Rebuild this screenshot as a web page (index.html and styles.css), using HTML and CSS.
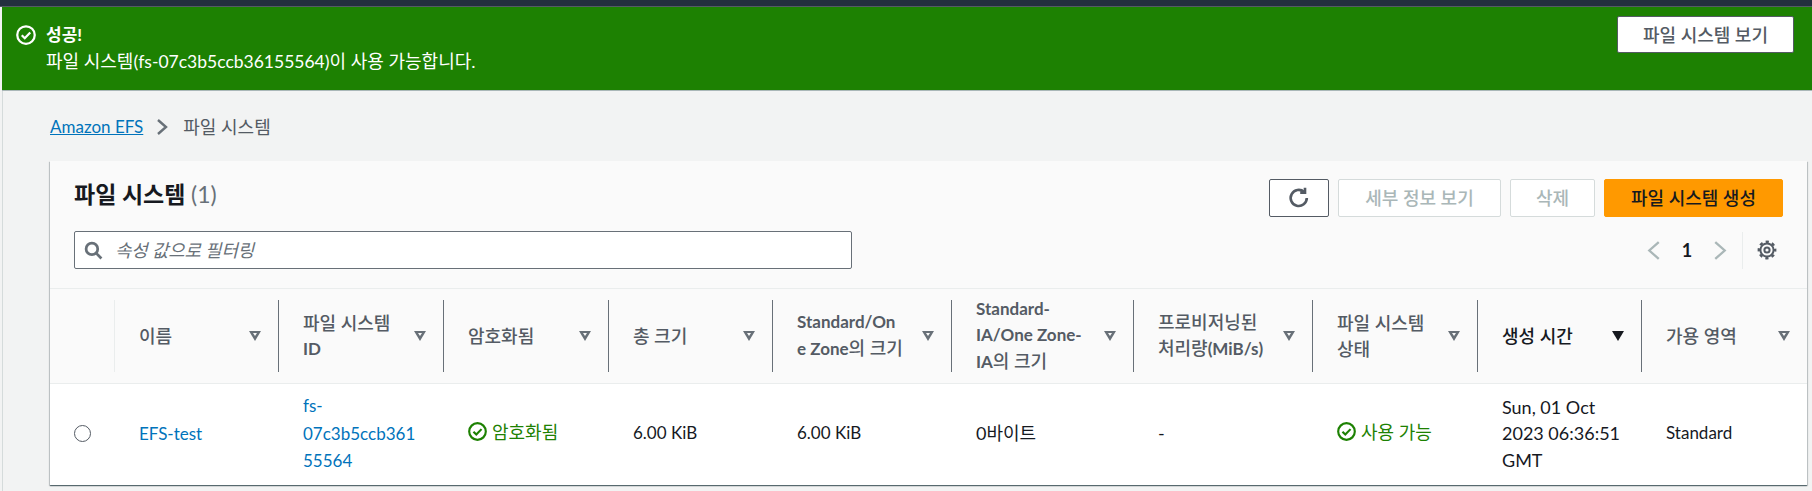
FILE: index.html
```html
<!DOCTYPE html>
<html lang="ko">
<head>
<meta charset="utf-8">
<title>파일 시스템</title>
<link rel="stylesheet" href="styles.css">
</head>
<body>
<div class="topbar"></div>
<div class="page">
<div class="flash">
  <svg class="flash-icon" viewBox="0 0 16 16"><circle cx="8" cy="8" r="7"/><path d="M4.6 8.2l2.4 2.4 4.4-4.6"/></svg>
  <div class="flash-text">
    <div class="flash-title">성공!</div>
    <div class="flash-msg">파일 시스템(<span class="flash-id">fs-07c3b5ccb36155564</span>)이 사용 가능합니다.</div>
  </div>
  <button class="btn btn-flash">파일 시스템 보기</button>
</div>
<main class="content">
  <nav class="crumbs">
    <a class="crumb-link lat" href="#">Amazon EFS</a>
    <svg class="crumb-sep" viewBox="0 0 12 18"><path d="M2 2l8 7-8 7"/></svg>
    <span class="crumb-cur">파일 시스템</span>
  </nav>
  <section class="panel">
    <div class="panel-head">
      <div class="head-row">
        <h1 class="title">파일 시스템 <span class="count">(1)</span></h1>
        <div class="actions">
          <button class="btn btn-icon"><svg viewBox="0 0 20 20"><path d="M16.5 10a6.7 6.7 0 1 1-2.2-5"/><path d="M15 1.5v4h-4"/></svg></button>
          <button class="btn btn-off btn-details">세부 정보 보기</button>
          <button class="btn btn-off btn-delete">삭제</button>
          <button class="btn btn-primary">파일 시스템 생성</button>
        </div>
      </div>
      <div class="tools-row">
        <div class="filter">
          <svg class="search" viewBox="0 0 18 18"><circle cx="7.5" cy="7.5" r="5.5"/><path d="M11.5 11.5l5 5"/></svg>
          <span class="placeholder">속성 값으로 필터링</span>
        </div>
        <div class="pager">
          <svg class="pg-arrow" viewBox="0 0 14 20"><path d="M12 2L3 10l9 8"/></svg>
          <span class="pg-num">1</span>
          <svg class="pg-arrow" viewBox="0 0 14 20"><path d="M2 2l9 8-9 8"/></svg>
          <span class="pg-div"></span>
          <svg class="gear" viewBox="0 0 20 20"><circle cx="10" cy="10" r="2.6"/><circle cx="10" cy="10" r="6.6"/><circle class="gear-teeth" cx="10" cy="10" r="8.2"/></svg>
        </div>
      </div>
    </div>
    <table class="grid">
      <colgroup>
        <col class="c-radio"><col class="c-name"><col class="c-id"><col class="c-enc"><col class="c-total"><col class="c-std"><col class="c-ia"><col class="c-tp"><col class="c-state"><col class="c-time"><col class="c-az">
      </colgroup>
      <thead>
        <tr>
          <th><div class="th-box th-first"></div></th>
          <th><div class="th-box"><span class="th-label">이름</span><span class="tri"></span></div></th>
          <th><div class="th-box"><span class="th-label"><span class="th-line">파일 시스템</span><span class="th-line lat-b">ID</span></span><span class="tri"></span></div></th>
          <th><div class="th-box"><span class="th-label">암호화됨</span><span class="tri"></span></div></th>
          <th><div class="th-box"><span class="th-label">총 크기</span><span class="tri"></span></div></th>
          <th><div class="th-box"><span class="th-label"><span class="th-line lat-b">Standard/On</span><span class="th-line"><span class="lat-b">e Zone</span>의 크기</span></span><span class="tri"></span></div></th>
          <th><div class="th-box"><span class="th-label"><span class="th-line lat-b">Standard-</span><span class="th-line lat-b">IA/One Zone-</span><span class="th-line"><span class="lat-b">IA</span>의 크기</span></span><span class="tri"></span></div></th>
          <th><div class="th-box"><span class="th-label"><span class="th-line">프로비저닝된</span><span class="th-line">처리량<span class="lat-b">(MiB/s)</span></span></span><span class="tri"></span></div></th>
          <th><div class="th-box"><span class="th-label"><span class="th-line">파일 시스템</span><span class="th-line">상태</span></span><span class="tri"></span></div></th>
          <th><div class="th-box"><span class="th-label th-sorted">생성 시간</span><span class="tri tri-on"></span></div></th>
          <th><div class="th-box"><span class="th-label">가용 영역</span><span class="tri"></span></div></th>
        </tr>
      </thead>
      <tbody>
        <tr>
          <td class="td-radio"><span class="radio"></span></td>
          <td><a class="link lat" href="#">EFS-test</a></td>
          <td class="td-brk"><a class="link lat" href="#">fs-07c3b5ccb36155564</a></td>
          <td><span class="ok"><svg class="ok-icon" viewBox="0 0 16 16"><circle cx="8" cy="8" r="7"/><path d="M4.6 8.2l2.4 2.4 4.4-4.6"/></svg>암호화됨</span></td>
          <td class="lat">6.00 KiB</td>
          <td class="lat">6.00 KiB</td>
          <td>0바이트</td>
          <td>-</td>
          <td><span class="ok"><svg class="ok-icon" viewBox="0 0 16 16"><circle cx="8" cy="8" r="7"/><path d="M4.6 8.2l2.4 2.4 4.4-4.6"/></svg>사용 가능</span></td>
          <td>Sun, 01 Oct 2023 06:36:51 GMT</td>
          <td class="lat">Standard</td>
        </tr>
      </tbody>
    </table>
  </section>
</main>
</div>
</body>
</html>
```
FILE: styles.css
```css
* { box-sizing: border-box; }
html, body { height: 100%; }
body {
  margin: 0;
  background: #f2f3f3;
  color: #16191f;
  font-family: "Lato", "Noto Sans CJK KR", sans-serif;
  font-size: 18px;
  line-height: 26px;
  overflow: hidden;
}
.lat { font-size: 17px; }
.lat-b { font-size: 17px; font-weight: 700; }
.topbar { height: 7px; background: #232f3e; border-bottom: 1px solid #545b64; }
.page { height: 484px; margin-left: 2px; border-left: 1px solid #d5dbdb; }
.flash {
  height: 84px;
  margin-left: -1px;
  padding: 9px 18px 0 14px;
  background: #1d8102;
  border-bottom: 1px solid #aab7b8;
  color: #fff;
  display: flex;
  align-items: flex-start;
  gap: 10px;
}
.flash-icon { width: 20px; height: 20px; margin-top: 9px; fill: none; stroke: #fff; stroke-width: 1.8; }
.flash-text { flex: 1; padding-top: 6px; }
.flash-title { font-weight: 700; font-size: 17px; line-height: 26px; }
.flash-msg { line-height: 26px; }
.flash-id { font-size: 17.5px; }
.btn {
  font: inherit;
  font-size: 18px;
  height: 38px;
  border-radius: 2px;
  padding: 0;
}
.btn-flash { width: 177px; height: 37px; background: #fff; color: #545b64; border: 1px solid #545b64; font-weight: 500; }
.content { padding: 0 5px 0 47px; }
.crumbs { height: 70px; display: flex; align-items: center; gap: 13px; padding-top: 2px; }
.crumb-link { color: #0073bb; }
.crumb-sep { width: 12px; height: 18px; fill: none; stroke: #687078; stroke-width: 2.4; }
.crumb-cur { color: #545b64; margin-left: 2px; }
.panel {
  background: #fff;
  box-shadow: 0 1px 1px 0 rgba(0,28,36,.5), 1px 1px 1px 0 rgba(0,28,36,.15), -1px 1px 1px 0 rgba(0,28,36,.15);
}
.panel-head { background: #fafafa; padding: 18px 24px 0; border-bottom: 1px solid #eaeded; height: 128px; }
.head-row { display: flex; justify-content: space-between; align-items: flex-start; }
.title { margin: 0; font-size: 23px; line-height: 30px; font-weight: 700; }
.count { font-weight: 400; color: #687078; }
.actions { display: flex; gap: 9px; }
.btn-icon { width: 60px; background: #fff; border: 1px solid #545b64; display: flex; align-items: center; justify-content: center; }
.btn-icon svg { width: 24px; height: 24px; fill: none; stroke: #545b64; stroke-width: 2.2; }
.btn-off { background: #fff; border: 1px solid #d5dbdb; color: #aab7b8; font-weight: 500; }
.btn-details { width: 163px; }
.btn-delete { width: 85px; }
.btn-primary { width: 179px; background: #ff9900; border: 1px solid #ff9900; color: #16191f; font-weight: 500; }
.tools-row { display: flex; justify-content: space-between; align-items: center; margin-top: 14px; }
.filter {
  width: 778px;
  height: 38px;
  background: #fff;
  border: 1px solid #687078;
  border-radius: 2px;
  display: flex;
  align-items: center;
  gap: 12px;
  padding-left: 9px;
}
.search { width: 19px; height: 19px; fill: none; stroke: #687078; stroke-width: 2.6; }
.placeholder { font-style: italic; color: #687078; font-size: 17.8px; }
.pager { display: flex; align-items: center; height: 38px; }
.pg-arrow { width: 15px; height: 21px; fill: none; stroke: #aab7b8; stroke-width: 2.2; }
.pg-num { width: 52px; text-align: center; font-weight: 700; }
.pg-div { width: 1px; height: 37px; background: #eaeded; margin: 0 14px 0 14px; }
.gear { width: 20px; height: 20px; fill: none; stroke: #545b64; stroke-width: 2; margin-right: 6px; overflow: visible; }
.gear-teeth { stroke-width: 2.4; stroke-dasharray: 3.2 3.24; stroke-dashoffset: 1.6; }
.grid { width: 100%; border-collapse: collapse; table-layout: fixed; }
.c-radio { width: 65px; } .c-name { width: 164px; } .c-id { width: 165px; } .c-enc { width: 165px; }
.c-total { width: 164px; } .c-std { width: 179px; } .c-ia { width: 182px; } .c-tp { width: 179px; }
.c-state { width: 165px; } .c-time { width: 164px; } .c-az { width: 165px; }
th { padding: 0; height: 94px; background: #fafafa; border-bottom: 1px solid #eaeded; text-align: left; font-weight: 500; color: #545b64; }
.th-box { height: 72px; border-right: 1px solid #687078; padding: 0 17px 0 24px; display: flex; align-items: center; justify-content: space-between; gap: 8px; }
th:last-child .th-box { border-right: 0; }
.th-first { border-right-color: #eaeded; }
.th-label { line-height: 26px; }
.th-line { display: block; }
.th-sorted { color: #16191f; }
.tri { flex: none; width: 0; height: 0; border-left: 6.5px solid transparent; border-right: 6.5px solid transparent; border-top: 10px solid #687078; position: relative; }
.tri::after { content: ""; position: absolute; left: -2px; top: -8px; border-left: 2px solid transparent; border-right: 2px solid transparent; border-top: 3px solid #fafafa; }
.tri-on { border-top-color: #16191f; }
.tri-on::after { display: none; }
td { padding: 0 20px 2px 24px; height: 102px; font-weight: 400; color: #16191f; vertical-align: middle; line-height: 26.5px; }
.td-radio { padding: 0 0 2px 24px; }
.td-brk { overflow-wrap: anywhere; }
.radio { display: block; width: 17px; height: 17px; border: 1.5px solid #545b64; border-radius: 50%; background: #fff; }
.link { color: #0073bb; text-decoration: none; }
.ok { color: #1d8102; display: inline-flex; align-items: center; gap: 5px; }
.ok-icon { width: 19px; height: 19px; fill: none; stroke: #1d8102; stroke-width: 1.8; }
```
